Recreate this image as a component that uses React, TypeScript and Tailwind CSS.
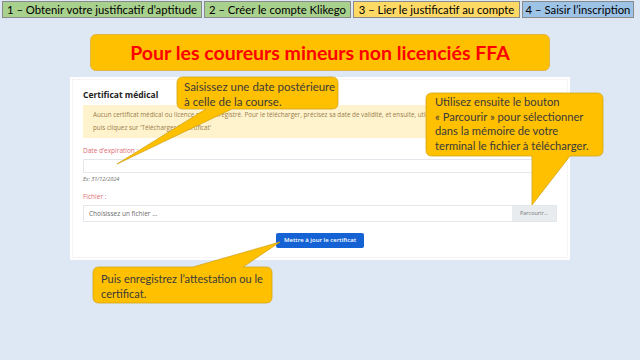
import React from 'react';

const calibri = { fontFamily: 'Lato, "Liberation Sans", sans-serif' };

const steps = [
  { label: '1 – Obtenir votre justificatif d’aptitude', cls: 'w-[200px] bg-[#a9d18e]' },
  { label: '2 – Créer le compte Klikego', cls: 'w-[147px] bg-[#a9d18e]' },
  { label: '3 – Lier le justificatif au compte', cls: 'w-[167px] bg-[#ffd966]' },
  { label: '4 – Saisir l’inscription', cls: 'w-[112px] bg-[#9dc3e6]' },
];

function Callouts() {
  return (
    <svg className="pointer-events-none absolute left-0 top-0" width="640" height="360" viewBox="0 0 640 360">
      <g fill="#ffc000" stroke="#d4a418" strokeWidth="0.8">
        <path d="M183,77 H332 Q338,77 338,83 V103 Q338,109 332,109 H232 L117,164 L206,109 H183 Q177,109 177,103 V83 Q177,77 183,77 Z" />
        <path d="M432,93 H597 Q603,93 603,99 V150 Q603,156 597,156 H570 L532,205 L532,156 H432 Q426,156 426,150 V99 Q426,93 432,93 Z" />
        <path d="M99,267 H193 L280,242 L243,267 H266 Q272,267 272,273 V297 Q272,303 266,303 H99 Q93,303 93,297 V273 Q93,267 99,267 Z" />
      </g>
    </svg>
  );
}

export default function App() {
  return (
    <div className="relative w-[640px] h-[360px] overflow-hidden bg-[#dee8f5]">
      {/* Steps */}
      <div className="flex gap-[2px] pl-[2px] pt-[1px]" style={calibri}>
        {steps.map((s) => (
          <div
            key={s.label}
            className={`${s.cls} h-[17px] border border-[#8a8a8a] flex items-center justify-center text-[11.3px] leading-none text-black`}
          >
            {s.label}
          </div>
        ))}
      </div>

      {/* Title */}
      <div
        className="mx-auto mt-[16px] w-[460px] h-[37px] rounded-[6px] bg-[#ffc000] border border-[#e3b54a] flex items-center justify-center text-[19.5px] font-bold text-[#ff0000]"
        style={calibri}
      >
        Pour les coureurs mineurs non licenciés FFA
      </div>

      {/* Card */}
      <div className="mx-auto mt-[6px] w-[500px] bg-white p-[2px]" style={{ fontFamily: '"Open Sans", sans-serif' }}>
        <div className="border border-dotted border-[#ececec] px-[10px] pt-[9px] pb-[9px]">
          <div className="text-[8.5px] leading-[12px] font-bold text-[#222]">Certificat médical</div>
          <div className="mt-[4px] h-[33px] bg-[#fff3cd] px-[10px] py-[4px] text-[6.3px] leading-[12.5px] text-[#9a7d4b]">
            <div className="whitespace-nowrap">Aucun certificat médical ou licence n’est enregistré. Pour le télécharger, précisez sa date de validité, et ensuite, utilisez le bouton Parcourir</div>
            <div>puis cliquez sur 'Télécharger le certificat'</div>
          </div>
          <div className="mt-[8px] text-[6.5px] leading-[10px] text-[#e06c75]">Date d’expiration :</div>
          <div className="mt-[3px] h-[14px] border border-[#e3e6ea] bg-white"></div>
          <div className="mt-[1px] text-[5.5px] leading-[10px] italic text-[#666]">Ex: 31/12/2024</div>
          <div className="mt-[8px] text-[6.5px] leading-[10px] text-[#e06c75]">Fichier :</div>
          <div className="mt-[3px] flex h-[17px] border border-[#e3e6ea]">
            <div className="flex-1 flex items-center pl-[5px] text-[6.5px] text-[#6b6b6b]">Choisissez un fichier ...</div>
            <div className="w-[44px] bg-[#e9ecef] flex items-center justify-center text-[5.5px] text-[#777]">Parcourir...</div>
          </div>
          <div className="mt-[11px] flex justify-center">
            <div className="w-[88px] h-[15px] rounded-[2px] bg-[#1462d4] flex items-center justify-center text-[6px] font-semibold text-white">
              Mettre à jour le certificat
            </div>
          </div>
        </div>
      </div>

      <Callouts />

      {/* Callout texts */}
      <div className="absolute left-[184px] top-[79px] text-[11.5px] leading-[15px] text-[#3a3a3a]" style={calibri}>
        <div>Saisissez une date postérieure</div>
        <div>à celle de la course.</div>
      </div>
      <div className="absolute left-[435px] top-[95px] text-[11.2px] leading-[14.5px] text-[#3a3a3a]" style={calibri}>
        <div>Utilisez ensuite le bouton</div>
        <div>« Parcourir » pour sélectionner</div>
        <div>dans la mémoire de votre</div>
        <div>terminal le fichier à télécharger.</div>
      </div>
      <div className="absolute left-[101px] top-[271px] text-[11px] leading-[15px] text-[#3a3a3a]" style={calibri}>
        <div>Puis enregistrez l’attestation ou le</div>
        <div>certificat.</div>
      </div>
    </div>
  );
}
